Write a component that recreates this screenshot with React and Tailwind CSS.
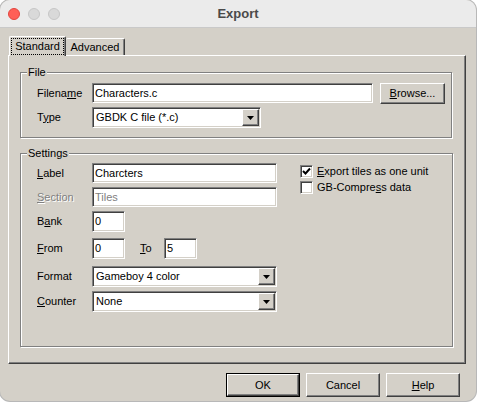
import React from 'react';

// classic win32 bevels
const sunken =
  'border border-t-[#808080] border-l-[#808080] border-b-white border-r-white shadow-[inset_1px_1px_0_#404040,inset_-1px_-1px_0_#d4d0c8]';
const raised =
  'border border-t-white border-l-white border-b-[#404040] border-r-[#404040] shadow-[inset_-1px_-1px_0_#808080]';
const etched = 'border border-[#808080] shadow-[inset_1px_1px_0_white,1px_1px_0_white]';

const U = ({ children }) => <span className="underline underline-offset-[1px] decoration-1">{children}</span>;

const TextBox = ({ value, width, height = 'h-[20px]', disabled = false }) => (
  <div className={`${sunken} ${width} ${height} bg-white flex items-center pl-[2px] ${disabled ? 'text-[#808080]' : 'text-black'}`}>
    {value}
  </div>
);

const Arrow = () => (
  <svg width="7" height="4" viewBox="0 0 7 4">
    <polygon points="0,0 7,0 3.5,4" fill="black" />
  </svg>
);

const Select = ({ value, width }) => (
  <div className={`${sunken} ${width} h-[21px] bg-white flex items-stretch p-[1px]`}>
    <div className="flex-1 flex items-center pl-[2px]">{value}</div>
    <div className={`${raised} w-[17px] bg-[#d4d0c8] flex items-center justify-center`}>
      <Arrow />
    </div>
  </div>
);

const Checkbox = ({ checked, children }) => (
  <div className="flex items-center h-[16px]">
    <div className={`${sunken} w-[13px] h-[13px] bg-white flex items-center justify-center`}>
      {checked && (
        <svg width="9" height="9" viewBox="0 0 9 9">
          <polyline points="1,4 3.5,6.5 8,1.5" fill="none" stroke="black" strokeWidth="2" />
        </svg>
      )}
    </div>
    <span className="ml-[4px]">{children}</span>
  </div>
);

const Group = ({ title, className, children }) => (
  <div className={`relative ${etched} ${className}`}>
    <span className="absolute left-[6px] top-[-8px] px-[1px] bg-[#d4d0c8] leading-[14px]">{title}</span>
    {children}
  </div>
);

const Row = ({ label, className = '', disabled = false, children }) => (
  <div className={`flex items-start ${className}`}>
    <div
      className={`w-[55px] h-[20px] flex items-center ${
        disabled ? 'text-[#808080] [text-shadow:1px_1px_0_white]' : ''
      }`}
    >
      {label}
    </div>
    {children}
  </div>
);

const Button = ({ children, isDefault = false }) => (
  <div className={isDefault ? 'border border-black' : ''}>
    <div
      className={`${raised} ${isDefault ? 'w-[72px] h-[22px]' : 'w-[74px] h-[24px]'} bg-[#d4d0c8] flex items-center justify-center`}
    >
      {children}
    </div>
  </div>
);

export default function App() {
  return (
    <div className="w-[478px] h-[402px] bg-white">
      <div className="w-[476px] h-[401px] rounded-[10px] overflow-hidden ring-1 ring-[#b8b8b8] flex flex-col bg-[#d4d0c8] font-['Liberation_Sans',Arial,sans-serif] text-[11px] text-black leading-none">
        {/* Title bar */}
        <div className="h-[28px] bg-[#ebebeb] border-b border-[#c9c9c9] grid grid-cols-[1fr_auto_1fr] items-center">
          <div className="flex items-center gap-[8px] pl-[8px]">
            <span className="w-[12px] h-[12px] rounded-full bg-[#ff5f57] border border-[#e2463f]" />
            <span className="w-[12px] h-[12px] rounded-full bg-[#d9d9d9] border border-[#c6c6c6]" />
            <span className="w-[12px] h-[12px] rounded-full bg-[#d9d9d9] border border-[#c6c6c6]" />
          </div>
          <div className="text-[13px] font-bold text-[#4a4a4a]">Export</div>
          <div />
        </div>

        {/* Content */}
        <div className="flex-1 px-[8px] pt-[8px]">
          {/* Tabs */}
          <div className="flex h-[19px] ml-[1px]">
            <div className="relative z-10 self-start w-[57px] h-[20px] bg-[#d4d0c8] border-t border-l border-white border-r border-r-[#404040] shadow-[inset_-1px_0_0_#808080] rounded-t-[2px] flex items-center justify-center">
              <span className="outline outline-1 outline-dotted outline-black px-[3px] py-[2px]">Standard</span>
            </div>
            <div className="self-end w-[59px] h-[17px] border-t border-white border-r border-r-[#404040] shadow-[inset_-1px_0_0_#808080] rounded-t-[2px] flex items-center justify-center">
              Advanced
            </div>
          </div>

          {/* Tab panel */}
          <div className="w-[458px] h-[309px] border border-t-white border-l-white border-r-[#404040] border-b-[#404040] shadow-[inset_-1px_-1px_0_#808080] pl-[11px] pt-[16px]">
            <Group title="File" className="w-[432px] h-[66px] pl-[16px] pt-[10px]">
              <Row label={<span>Filena<U>m</U>e</span>}>
                <TextBox value="Characters.c" width="w-[281px]" />
                <div className="ml-[7px]">
                  <div className={`${raised} w-[65px] h-[21px] flex items-center justify-center`}>
                    <span>
                      <U>B</U>rowse...
                    </span>
                  </div>
                </div>
              </Row>
              <Row label={<span>T<U>y</U>pe</span>} className="mt-[3px]">
                <Select value="GBDK C file (*.c)" width="w-[169px]" />
              </Row>
            </Group>

            <Group title="Settings" className="mt-[15px] w-[433px] h-[194px] pl-[16px] pt-[9px] flex">
              <div className="w-[240px]">
                <Row label={<span><U>L</U>abel</span>}>
                  <TextBox value="Charcters" width="w-[185px]" />
                </Row>
                <Row label={<span><U>S</U>ection</span>} disabled className="mt-[4px]">
                  <TextBox value="Tiles" width="w-[185px]" disabled />
                </Row>
                <Row label={<span>B<U>a</U>nk</span>} className="mt-[4px]">
                  <TextBox value="0" width="w-[33px]" height="h-[21px]" />
                </Row>
                <Row label={<span><U>F</U>rom</span>} className="mt-[6px]">
                  <TextBox value="0" width="w-[33px]" height="h-[21px]" />
                  <div className="ml-[15px] w-[24px] h-[21px] flex items-center">
                    <span><U>T</U>o</span>
                  </div>
                  <TextBox value="5" width="w-[33px]" height="h-[21px]" />
                </Row>
                <Row label="Format" className="mt-[7px]">
                  <Select value="Gameboy 4 color" width="w-[185px]" />
                </Row>
                <Row label={<span><U>C</U>ounter</span>} className="mt-[4px]">
                  <Select value="None" width="w-[185px]" />
                </Row>
              </div>
              <div className="ml-[23px]">
                <Checkbox checked>
                  <U>E</U>xport tiles as one unit
                </Checkbox>
                <Checkbox>
                  GB-Compre<U>s</U>s data
                </Checkbox>
              </div>
            </Group>
          </div>

          {/* Dialog buttons */}
          <div className="flex justify-end gap-[6px] pr-[8px] mt-[9px]">
            <Button isDefault>OK</Button>
            <Button>Cancel</Button>
            <Button>
              <span><U>H</U>elp</span>
            </Button>
          </div>
        </div>
      </div>
    </div>
  );
}
